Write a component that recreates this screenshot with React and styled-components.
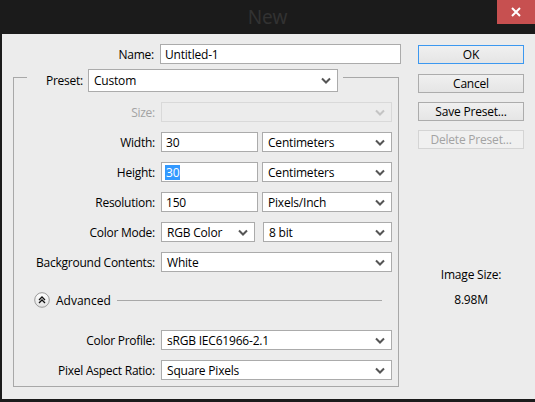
import React from 'react';
import styled, {createGlobalStyle} from 'styled-components';

const Global = createGlobalStyle`
  html, body {
    margin: 0;
    padding: 0;
    background: #1b1b1b;
  }
  body {
    width: 535px;
    height: 402px;
    overflow: hidden;
    font-family: "Open Sans", "Noto Sans", sans-serif;
    font-size: 12px;
    color: #000;
  }
`

const Window = styled.div`
  display: flex;
  flex-direction: column;
  width: 535px;
  height: 402px;
`

const TitleBar = styled.div`
  height: 34px;
  display: flex;
  align-items: center;
  justify-content: center;
  position: relative;
  color: #323232;
  font-size: 19px;
  font-family: "Noto Sans", sans-serif;
`

const CloseBtn = styled.div`
  position: absolute;
  top: 0;
  right: 0;
  width: 38px;
  height: 24px;
  background: #c75050;
  display: flex;
  align-items: center;
  justify-content: center;
`

const Body = styled.div`
  margin-left: 2px;
  height: 365px;
  background: #ececec;
  display: flex;
  padding: 10px 0 0 11px;
  box-sizing: border-box;
`

const LeftCol = styled.div`
  display: flex;
  flex-direction: column;
  width: 388px;
`

const RightCol = styled.div`
  display: flex;
  flex-direction: column;
  align-items: center;
  width: 106px;
  margin-left: 17px;
  padding-top: 1px;
`

const Row = styled.div`
  display: flex;
  align-items: center;
  gap: ${p => p.$gap || 6}px;
`

const Label = styled.div`
  width: ${p => p.$w || 141}px;
  text-align: right;
  letter-spacing: -0.25px;
  white-space: nowrap;
  color: ${p => p.$disabled ? '#a3a3a3' : '#000'};
`

const Input = styled.div`
  width: ${p => p.$w}px;
  height: 20px;
  box-sizing: border-box;
  border: 1px solid #ababab;
  background: #fff;
  display: flex;
  align-items: center;
  padding-left: 4px;
  letter-spacing: -0.2px;
`

const Selected = styled.span`
  background: #3399ff;
  color: #fff;
  padding: 0 1px;
  margin-left: -1px;
  line-height: 15px;
`

const SelectBox = styled.div`
  width: ${p => p.$w}px;
  height: ${p => p.$h || 20}px;
  box-sizing: border-box;
  border: 1px solid ${p => p.$disabled ? '#d9d9d9' : '#ababab'};
  background: ${p => p.$disabled ? '#ececec' : '#fff'};
  display: flex;
  align-items: center;
  justify-content: space-between;
  padding: 0 6px 0 5px;
  letter-spacing: -0.2px;
  white-space: nowrap;
`

const Group = styled.fieldset`
  margin: -2px 0 0 0;
  padding: 10px 6px 6px 0;
  border: 1px solid #a8a8a8;
  width: 386px;
  box-sizing: border-box;
  display: flex;
  flex-direction: column;
  gap: 10px;
`

const Legend = styled.legend`
  margin-left: 13px;
  padding: 7px 5px 0 5px;
  display: flex;
  align-items: center;
  gap: 5px;
`

const AdvRow = styled.div`
  display: flex;
  align-items: center;
  height: 16px;
  margin: 10px 10px 12px 20px;
  gap: 6px;
`

const Rule = styled.div`
  flex: 1;
  height: 1px;
  background: #a8a8a8;
`

const Button = styled.div`
  width: 106px;
  height: 19px;
  box-sizing: border-box;
  border: 1px solid ${p => p.$primary ? '#3c98f0' : (p.$disabled ? '#d4d4d4' : '#acacac')};
  background: ${p => p.$disabled ? '#f0f0f0' : 'linear-gradient(#f0f0f0, #e5e5e5)'};
  color: ${p => p.$disabled ? '#a3a3a3' : '#000'};
  display: flex;
  align-items: center;
  justify-content: center;
  margin-bottom: ${p => p.$mb || 0}px;
  letter-spacing: -0.2px;
`

const InfoText = styled.div`
  margin-top: ${p => p.$mt}px;
  letter-spacing: -0.2px;
`

function Chevron({disabled}) {
    return (
        <svg width="10" height="7" viewBox="0 0 10 7">
            <polyline points="1,1.5 5,5.5 9,1.5" fill="none" stroke={disabled ? '#c4c4c4' : '#555'} strokeWidth="2"/>
        </svg>
    )
}

function Select({w, h, disabled, children}) {
    return (
        <SelectBox $w={w} $h={h} $disabled={disabled}>
            <span>{children}</span>
            <Chevron disabled={disabled}/>
        </SelectBox>
    )
}

function AdvancedIcon() {
    return (
        <svg width="16" height="16" viewBox="0 0 16 16">
            <defs>
                <linearGradient id="adv" x1="0" y1="0" x2="0" y2="1">
                    <stop offset="0" stopColor="#ffffff"/>
                    <stop offset="1" stopColor="#e2e2e2"/>
                </linearGradient>
            </defs>
            <circle cx="8" cy="8" r="7.3" fill="url(#adv)" stroke="#9a9a9a" strokeWidth="1"/>
            <polyline points="5,8 8,5 11,8" fill="none" stroke="#111" strokeWidth="1.3"/>
            <polyline points="5,11 8,8 11,11" fill="none" stroke="#111" strokeWidth="1.3"/>
        </svg>
    )
}

export default function App() {
    return (
        <Window>
            <Global/>
            <TitleBar>
                New
                <CloseBtn>
                    <svg width="10" height="10" viewBox="0 0 10 10">
                        <path d="M1 1 L9 9 M9 1 L1 9" stroke="#fff" strokeWidth="2"/>
                    </svg>
                </CloseBtn>
            </TitleBar>
            <Body>
                <LeftCol>
                    <Row>
                        <Label>Name:</Label>
                        <Input $w={241}>Untitled-1</Input>
                    </Row>
                    <Group>
                        <Legend>
                            <Label $w={51}>Preset:</Label>
                            <Select w={250} h={23}>Custom</Select>
                        </Legend>
                        <Row>
                            <Label $disabled>Size:</Label>
                            <Select w={231} disabled></Select>
                        </Row>
                        <Row>
                            <Label>Width:</Label>
                            <Row $gap={4}>
                                <Input $w={97}>30</Input>
                                <Select w={130}>Centimeters</Select>
                            </Row>
                        </Row>
                        <Row>
                            <Label>Height:</Label>
                            <Row $gap={4}>
                                <Input $w={97}><Selected>30</Selected></Input>
                                <Select w={130}>Centimeters</Select>
                            </Row>
                        </Row>
                        <Row>
                            <Label>Resolution:</Label>
                            <Row $gap={4}>
                                <Input $w={97}>150</Input>
                                <Select w={130}>Pixels/Inch</Select>
                            </Row>
                        </Row>
                        <Row>
                            <Label>Color Mode:</Label>
                            <Row $gap={8}>
                                <Select w={94}>RGB Color</Select>
                                <Select w={129}>8 bit</Select>
                            </Row>
                        </Row>
                        <Row>
                            <Label>Background Contents:</Label>
                            <Select w={231}>White</Select>
                        </Row>
                        <AdvRow>
                            <AdvancedIcon/>
                            <span>Advanced</span>
                            <Rule/>
                        </AdvRow>
                        <Row>
                            <Label>Color Profile:</Label>
                            <Select w={231}>sRGB IEC61966-2.1</Select>
                        </Row>
                        <Row>
                            <Label>Pixel Aspect Ratio:</Label>
                            <Select w={231}>Square Pixels</Select>
                        </Row>
                    </Group>
                </LeftCol>
                <RightCol>
                    <Button $primary $mb={10}>OK</Button>
                    <Button $mb={9}>Cancel</Button>
                    <Button $mb={9}>Save Preset...</Button>
                    <Button $disabled>Delete Preset...</Button>
                    <InfoText $mt={117}>Image Size:</InfoText>
                    <InfoText $mt={8}>8.98M</InfoText>
                </RightCol>
            </Body>
        </Window>
    )
}
